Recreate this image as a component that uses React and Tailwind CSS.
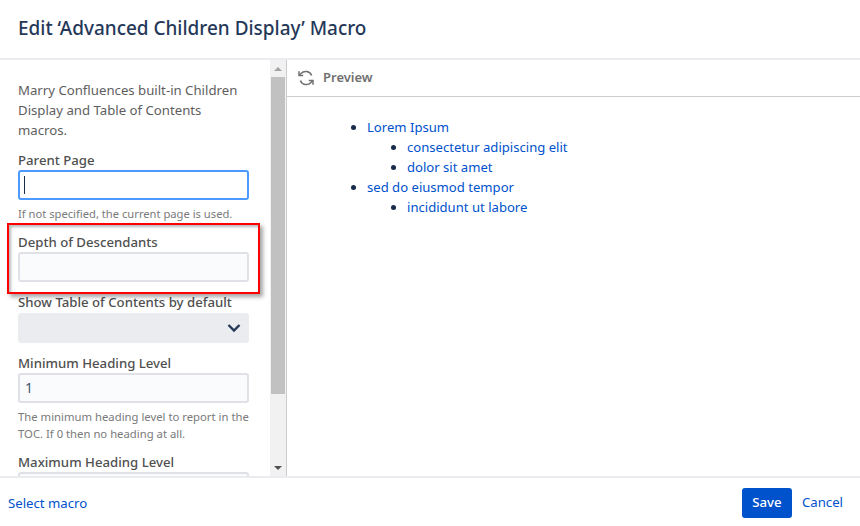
import React from 'react';

const Field = ({ label, value, help, className = '' }) => (
  <div className={className}>
    <div className="text-[13.2px] leading-[20px] font-medium text-[#505050]">{label}</div>
    <div className="h-[30px] w-[231px] rounded-[3px] border-2 border-[#dfe1e6] bg-[#fafbfc] px-[5px] text-[14px] leading-[26px] text-[#42526e]">{value}</div>
    {help && <p className="mt-[5px] text-[11.3px] leading-[17px] text-[#7a7a7a]">{help}</p>}
  </div>
);

const App = () => {
  return (
    <div className="relative flex h-[526px] w-[860px] flex-col overflow-hidden bg-white font-['Noto_Sans',sans-serif]">
      <header className="flex h-[60px] shrink-0 items-center border-b-2 border-[#ebecf0] px-[18px] pb-[2px]">
        <h1 className="text-[18.95px] font-medium text-[#253858]">Edit ‘Advanced Children Display’ Macro</h1>
      </header>

      <div className="flex min-h-0 flex-1">
        <div className="h-full w-[270px] shrink-0 overflow-hidden pl-[18px] pt-[20px]">
          <p className="w-[231px] text-[13.2px] leading-[20px] text-[#5e5e5e]">
            Marry Confluences built-in Children Display and Table of Contents macros.
          </p>
          <div className="mt-[10px]">
            <div className="text-[13.2px] leading-[20px] font-medium text-[#505050]">Parent Page</div>
            <div className="flex h-[30px] w-[231px] items-center rounded-[3px] border-2 border-[#4c9aff] bg-white px-[4px]">
              <div className="h-[18px] w-px bg-[#172b4d]" />
            </div>
            <p className="mt-[5px] text-[11.2px] leading-[17px] text-[#7a7a7a]">If not specified, the current page is used.</p>
          </div>
          <Field label="Depth of Descendants" className="mt-[10px]" />
          <div className="mt-[10px]">
            <div className="text-[13.2px] leading-[20px] font-medium text-[#505050]">Show Table of Contents by default</div>
            <div className="mt-[1px] flex h-[30px] w-[231px] items-center justify-end rounded-[3px] bg-[#ebecf0] pr-[8px]">
              <svg width="14" height="10" viewBox="0 0 14 10" fill="none">
                <path d="M1.5 2 L7 7.5 L12.5 2" stroke="#253858" strokeWidth="2.4" />
              </svg>
            </div>
          </div>
          <Field
            label="Minimum Heading Level"
            value="1"
            className="mt-[10px]"
            help="The minimum heading level to report in the TOC. If 0 then no heading at all."
          />
          <Field label="Maximum Heading Level" className="mt-[10px]" />
        </div>

        {/* scrollbar */}
        <div className="flex h-full w-[17px] shrink-0 flex-col items-center border-r border-[#cccccc] bg-[#f1f1f1]">
          <div className="flex h-[17px] items-center justify-center">
            <div className="h-0 w-0 border-x-[4px] border-b-[4px] border-x-transparent border-b-[#a3a3a3]" />
          </div>
          <div className="h-[317px] w-[14px] bg-[#c1c1c1]" />
          <div className="flex-1" />
          <div className="flex h-[17px] items-center justify-center">
            <div className="h-0 w-0 border-x-[4px] border-t-[4px] border-x-transparent border-t-[#505050]" />
          </div>
        </div>

        <div className="min-w-0 flex-1">
          <div className="flex h-[37px] items-center gap-[9px] border-b border-[#cccccc] pl-[11px]">
            <svg width="16" height="16" viewBox="0 0 16 16" fill="none" stroke="#707070" strokeWidth="1.5">
              <path d="M13.6 5.6 A6.2 6.2 0 0 0 3 3.6 L1.6 5" />
              <path d="M1 1.2 V5.6 H5.2" />
              <path d="M2.4 10.4 A6.2 6.2 0 0 0 13 12.4 L14.4 11" />
              <path d="M15 14.8 V10.4 H10.8" />
            </svg>
            <span className="text-[13px] font-semibold text-[#707070]">Preview</span>
          </div>
          <ul className="mt-[20px] ml-[80px] list-disc text-[13.1px] leading-[20px] text-[#172b4d]">
            <li>
              <a className="text-[#0052cc]">Lorem Ipsum</a>
              <ul className="ml-[40px] list-disc">
                <li><a className="text-[#0052cc]">consectetur adipiscing elit</a></li>
                <li><a className="text-[#0052cc]">dolor sit amet</a></li>
              </ul>
            </li>
            <li>
              <a className="text-[#0052cc]">sed do eiusmod tempor</a>
              <ul className="ml-[40px] list-disc">
                <li><a className="text-[#0052cc]">incididunt ut labore</a></li>
              </ul>
            </li>
          </ul>
        </div>
      </div>

      <footer className="flex h-[50px] shrink-0 items-center justify-between border-t-2 border-[#ebecf0] pl-[8px] pr-[17px] pt-[2px]">
        <a className="pt-[1px] text-[13.2px] text-[#0052cc]">Select macro</a>
        <div className="flex items-center gap-[10px]">
          <button className="h-[30px] w-[50px] rounded-[3px] bg-[#0052cc] text-[13.2px] font-medium text-white">Save</button>
          <a className="text-[13.2px] text-[#0052cc]">Cancel</a>
        </div>
      </footer>

      {/* red annotation box */}
      <div className="absolute left-[7px] top-[223px] h-[71px] w-[253px] border-2 border-[#ff0000] shadow-[inset_2px_2px_3px_rgba(0,0,0,0.28),3px_3px_4px_rgba(0,0,0,0.35)]" />
    </div>
  );
};

export default App;
